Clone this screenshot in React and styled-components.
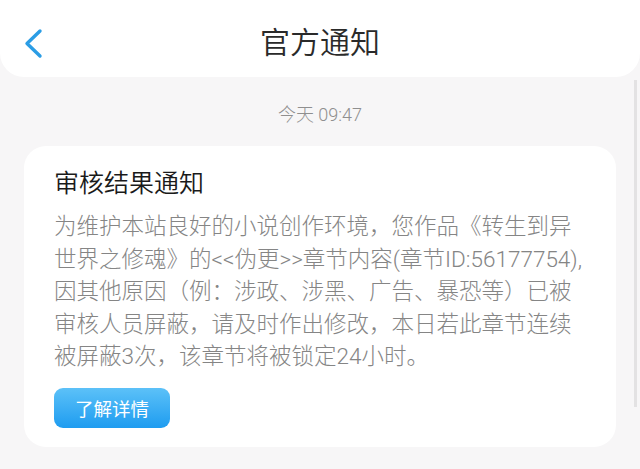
import styled, { createGlobalStyle } from "styled-components";

const GlobalStyle = createGlobalStyle`
  html, body {
    margin: 0;
    padding: 0;
    background: #f7f6f7;
  }
  body {
    font-family: Roboto, "Noto Sans CJK SC", sans-serif;
  }
`;

const App = () => {
  return (
    <Page>
      <GlobalStyle />
      <Header>
        <BackButton aria-label="back">
          <svg width="20" height="32" viewBox="0 0 20 32">
            <polyline
              points="16,3 3,15.5 16,28"
              fill="none"
              stroke="#2b9de5"
              strokeWidth="3.4"
              strokeLinecap="round"
              strokeLinejoin="round"
            />
          </svg>
        </BackButton>
        <Title>官方通知</Title>
      </Header>

      <Time>今天 09:47</Time>

      <Card>
        <CardTitle>审核结果通知</CardTitle>
        <Body>
          为维护本站良好的小说创作环境，您作品《转生到异
          <br />
          世界之修魂》的&lt;&lt;伪更&gt;&gt;章节内容(章节ID:56177754),
          <br />
          因其他原因（例：涉政、涉黑、广告、暴恐等）已被
          <br />
          审核人员屏蔽，请及时作出修改，本日若此章节连续
          <br />
          被屏蔽3次，该章节将被锁定24小时。
        </Body>
        <DetailButton>了解详情</DetailButton>
      </Card>

      <Scrollbar />
    </Page>
  );
};

const Page = styled.div`
  position: relative;
  min-height: 469px;
  background: #f7f6f7;
  display: flex;
  flex-direction: column;
  overflow: hidden;
`;

const Header = styled.header`
  height: 77px;
  background: #fff;
  border-radius: 0 0 24px 24px;
  display: flex;
  align-items: center;
  justify-content: center;
  position: relative;
`;

const BackButton = styled.button`
  position: absolute;
  left: 24px;
  top: 28px;
  padding: 0;
  border: none;
  background: none;
  display: flex;
`;

const Title = styled.h1`
  margin: 0;
  margin-top: 2px;
  font-size: 30px;
  font-weight: 350;
  color: #2a2a2a;
`;

const Time = styled.div`
  margin-top: 26px;
  text-align: center;
  font-size: 18px;
  line-height: 24px;
  font-weight: 300;
  color: #8f8f8f;
`;

const Card = styled.section`
  margin: 19px 24px 0;
  background: #fff;
  border-radius: 22px;
  padding: 20px 30px 19px;
  display: flex;
  flex-direction: column;
  align-items: flex-start;
`;

const CardTitle = styled.h2`
  margin: 0;
  font-size: 25px;
  line-height: 35px;
  font-weight: 350;
  color: #1a1a1a;
`;

const Body = styled.p`
  margin: 9px 0 0;
  font-size: 22.5px;
  line-height: 32.5px;
  font-weight: 300;
  color: #858585;
  white-space: nowrap;
`;

const DetailButton = styled.button`
  margin-top: 15px;
  width: 116px;
  height: 40px;
  border: none;
  border-radius: 9px;
  background: linear-gradient(180deg, #5cc1f8 0%, #1e9cf0 100%);
  color: #fff;
  font-family: Roboto, "Noto Sans CJK SC", sans-serif;
  font-size: 18.5px;
  font-weight: 400;
  padding: 0;
  cursor: pointer;
`;

const Scrollbar = styled.div`
  position: absolute;
  right: 3px;
  top: 80px;
  width: 3px;
  height: 327px;
  background: #e3e2e3;
`;

export default App;
